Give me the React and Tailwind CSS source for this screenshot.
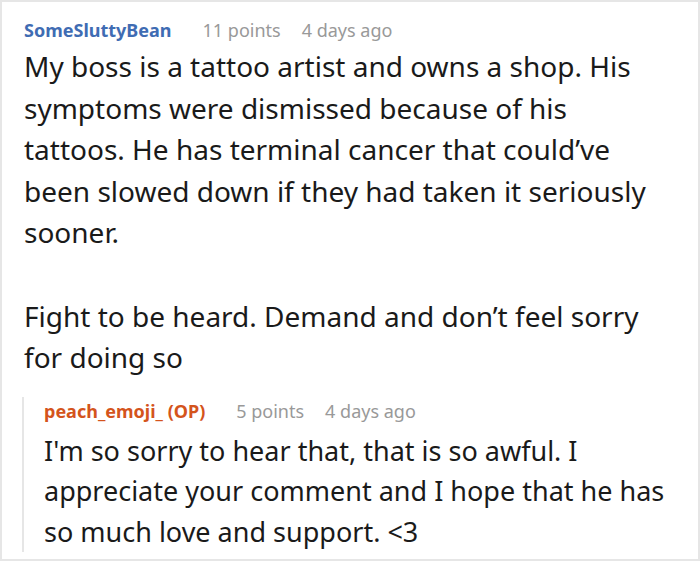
export default function App() {
  return (
    <div
      className="h-[562px] w-[700px] overflow-hidden bg-white"
      style={{ fontFamily: '"Noto Sans", "Open Sans", sans-serif' }}
    >
      <div className="h-[561px] border-2 border-[#e6e6e6] pl-[22px] pr-[6px] pt-[16px]">
        {/* comment header */}
        <div className="flex items-baseline text-[18px] leading-[24px]">
          <span className="font-bold text-[#3f6cb3]">SomeSluttyBean</span>
          <span className="ml-[31px] text-[#999999]">11 points</span>
          <span className="ml-[21px] text-[#999999]">4 days ago</span>
        </div>
        <div className="max-w-[626px] text-[28px] leading-[41.6px] text-[#1a1a1a]">
          <p className="mt-[4px]">
            My boss is a tattoo artist and owns a shop. His symptoms were
            dismissed because of his tattoos. He has terminal cancer that
            could’ve been slowed down if they had taken it seriously sooner.
          </p>
          <p className="mt-[41.6px]">
            Fight to be heard. Demand and don’t feel sorry for doing so
          </p>
        </div>

        {/* reply */}
        <div className="ml-[-2px] mt-[18px] border-l-2 border-[#e6e6e6] pl-[20px]">
          <div className="flex items-baseline pt-[2px] text-[18px] leading-[24px]">
            <span className="font-bold text-[#d4541c]">peach_emoji_ (OP)</span>
            <span className="ml-[31px] text-[#999999]">5 points</span>
            <span className="ml-[21px] text-[#999999]">4 days ago</span>
          </div>
          <p className="mt-[8px] text-[27px] leading-[40.5px] text-[#1a1a1a]">
            I'm so sorry to hear that, that is so awful. I appreciate your
            comment and I hope that he has so much love and support. &lt;3
          </p>
        </div>
      </div>
    </div>
  );
}
